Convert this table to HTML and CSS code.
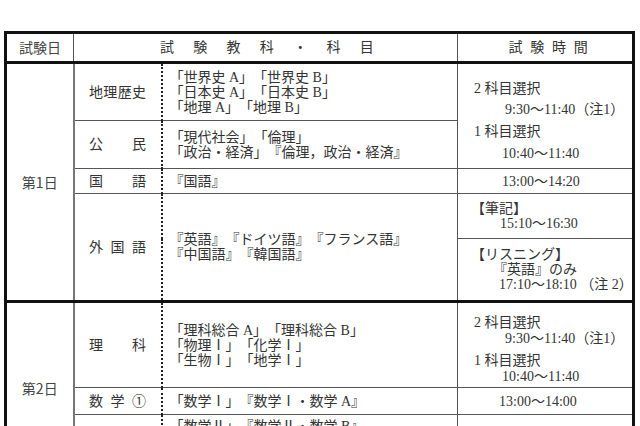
FILE: index.html
```html
<!DOCTYPE html>
<html lang="ja">
<head>
<meta charset="utf-8">
<title>試験日程</title>
<link rel="stylesheet" href="styles.css">
</head>
<body>
<table class="exam">
  <colgroup>
    <col class="c-day">
    <col class="c-cat">
    <col class="c-sub">
    <col class="c-time">
  </colgroup>
  <thead>
    <tr class="r-head">
      <th class="h-day goth">試験日</th>
      <th class="h-sub" colspan="2">試験教科・科目</th>
      <th class="h-time">試験時間</th>
    </tr>
  </thead>
  <tbody class="day1">
    <tr class="r-geo">
      <td class="day goth" rowspan="5">第1日</td>
      <td class="cat"><div class="cat-in"><span>地</span><span>理</span><span>歴</span><span>史</span></div></td>
      <td class="sub">「世界史 A」「世界史 B」<br>「日本史 A」「日本史 B」<br>「地理 A」「地理 B」</td>
      <td class="time sel" rowspan="2">
        <div class="t-lab">2 科目選択</div>
        <div class="t-val i-930">9:30～11:40（注1）</div>
        <div class="t-lab">1 科目選択</div>
        <div class="t-val i-1040">10:40～11:40</div>
      </td>
    </tr>
    <tr class="r-civ">
      <td class="cat"><div class="cat-in"><span>公</span><span>民</span></div></td>
      <td class="sub">「現代社会」「倫理」<br>「政治・経済」『倫理，政治・経済』</td>
    </tr>
    <tr class="r-jp">
      <td class="cat"><div class="cat-in"><span>国</span><span>語</span></div></td>
      <td class="sub">『国語』</td>
      <td class="time one"><div class="t-val i-one">13:00～14:20</div></td>
    </tr>
    <tr class="r-fl1">
      <td class="cat" rowspan="2"><div class="cat-in"><span>外</span><span>国</span><span>語</span></div></td>
      <td class="sub" rowspan="2">『英語』『ドイツ語』『フランス語』<br>『中国語』『韓国語』</td>
      <td class="time part split">
        <div class="t-brk">【筆記】</div>
        <div class="t-val i-1510">15:10～16:30</div>
      </td>
    </tr>
    <tr class="r-fl2">
      <td class="time part">
        <div class="t-brk">【リスニング】</div>
        <div class="t-val i-eng">『英語』のみ</div>
        <div class="t-val i-1710">17:10～18:10 （注 2）</div>
      </td>
    </tr>
  </tbody>
  <tbody class="day2">
    <tr class="r-sci">
      <td class="day goth" rowspan="3">第2日</td>
      <td class="cat"><div class="cat-in"><span>理</span><span>科</span></div></td>
      <td class="sub">「理科総合 A」「理科総合 B」<br>「物理Ⅰ」「化学Ⅰ」<br>「生物Ⅰ」「地学Ⅰ」</td>
      <td class="time sel2">
        <div class="t-lab">2 科目選択</div>
        <div class="t-val i-930">9:30～11:40（注1）</div>
        <div class="t-lab gap">1 科目選択</div>
        <div class="t-val i-1040">10:40～11:40</div>
      </td>
    </tr>
    <tr class="r-m1">
      <td class="cat"><div class="cat-in"><span>数</span><span>学</span><span>①</span></div></td>
      <td class="sub">「数学Ⅰ」『数学Ⅰ・数学 A』</td>
      <td class="time one"><div class="t-val i-m1">13:00～14:00</div></td>
    </tr>
    <tr class="r-m2">
      <td class="cat"></td>
      <td class="sub top">「数学Ⅱ」『数学Ⅱ・数学 B』</td>
      <td class="time one"></td>
    </tr>
  </tbody>
</table>
</body>
</html>
```
FILE: styles.css
```css
html, body {
  margin: 0;
  background: #ffffff;
}

body {
  color: #333333;
  font-family: "Liberation Serif", "Noto Sans CJK JP", serif;
  font-size: 14px;
  font-weight: 400;
  text-spacing-trim: space-all;
}

.goth {
  font-family: "Noto Sans CJK JP", sans-serif;
  font-weight: 400;
  color: #444444;
}

.exam {
  border-collapse: collapse;
  table-layout: fixed;
  width: 628px;
  margin: 31px 0 0 4px;
  border: 3px solid #111;
}

.c-day { width: 68px; }
.c-cat { width: 88px; }
.c-sub { width: 296px; }
.c-time { width: 176px; }

.exam th,
.exam td {
  padding: 0;
  border: 1px solid #555;
  line-height: 15px;
  vertical-align: middle;
}

.exam th {
  font-weight: 400;
  border-bottom: 3px solid #111;
}

.r-head { height: 30px; }
.r-geo { height: 58px; }
.r-civ { height: 48px; }
.r-jp { height: 25px; }
.r-fl1 { height: 45px; }
.r-fl2 { height: 63px; }
.r-sci { height: 86px; }
.r-m1 { height: 27px; }
.r-m2 { height: 60px; }

.h-day { text-align: center; }

.h-sub {
  text-align: center;
  letter-spacing: 19.3px;
  padding-left: 22px !important;
}

.h-time {
  text-align: center;
  letter-spacing: 7.7px;
  padding-left: 14px !important;
}

.day {
  text-align: center;
  border-right: 2px solid #777 !important;
}

.cat {
  border-right: 2px dotted #222 !important;
}

.cat-in {
  display: flex;
  justify-content: space-between;
  width: 57px;
  margin: 0 auto;
}

.sub {
  text-align: left;
  padding-left: 7px !important;
  white-space: nowrap;
}

.sub.top {
  vertical-align: top !important;
  padding-top: 4px !important;
}

.time {
  text-align: left;
  padding-left: 16px !important;
  white-space: nowrap;
}

.sel {
  line-height: 21.7px !important;
  padding-top: 10px !important;
}

.sel2 {
  line-height: 16px !important;
  padding-top: 9px !important;
}

.sel2 .gap { margin-top: 6px; }

.split {
  border-bottom: 1px dashed #777 !important;
}

.t-brk { margin-left: -3px; }

.i-930 { margin-left: 31px; }
.i-1040 { margin-left: 28px; }
.i-one { margin-left: 28px; }
.i-m1 { margin-left: 25px; }
.i-1510 { margin-left: 26px; }
.i-eng { margin-left: 19px; }
.i-1710 { margin-left: 25px; }

.day2 tr:first-child td {
  border-top: 3px solid #111;
}
```
